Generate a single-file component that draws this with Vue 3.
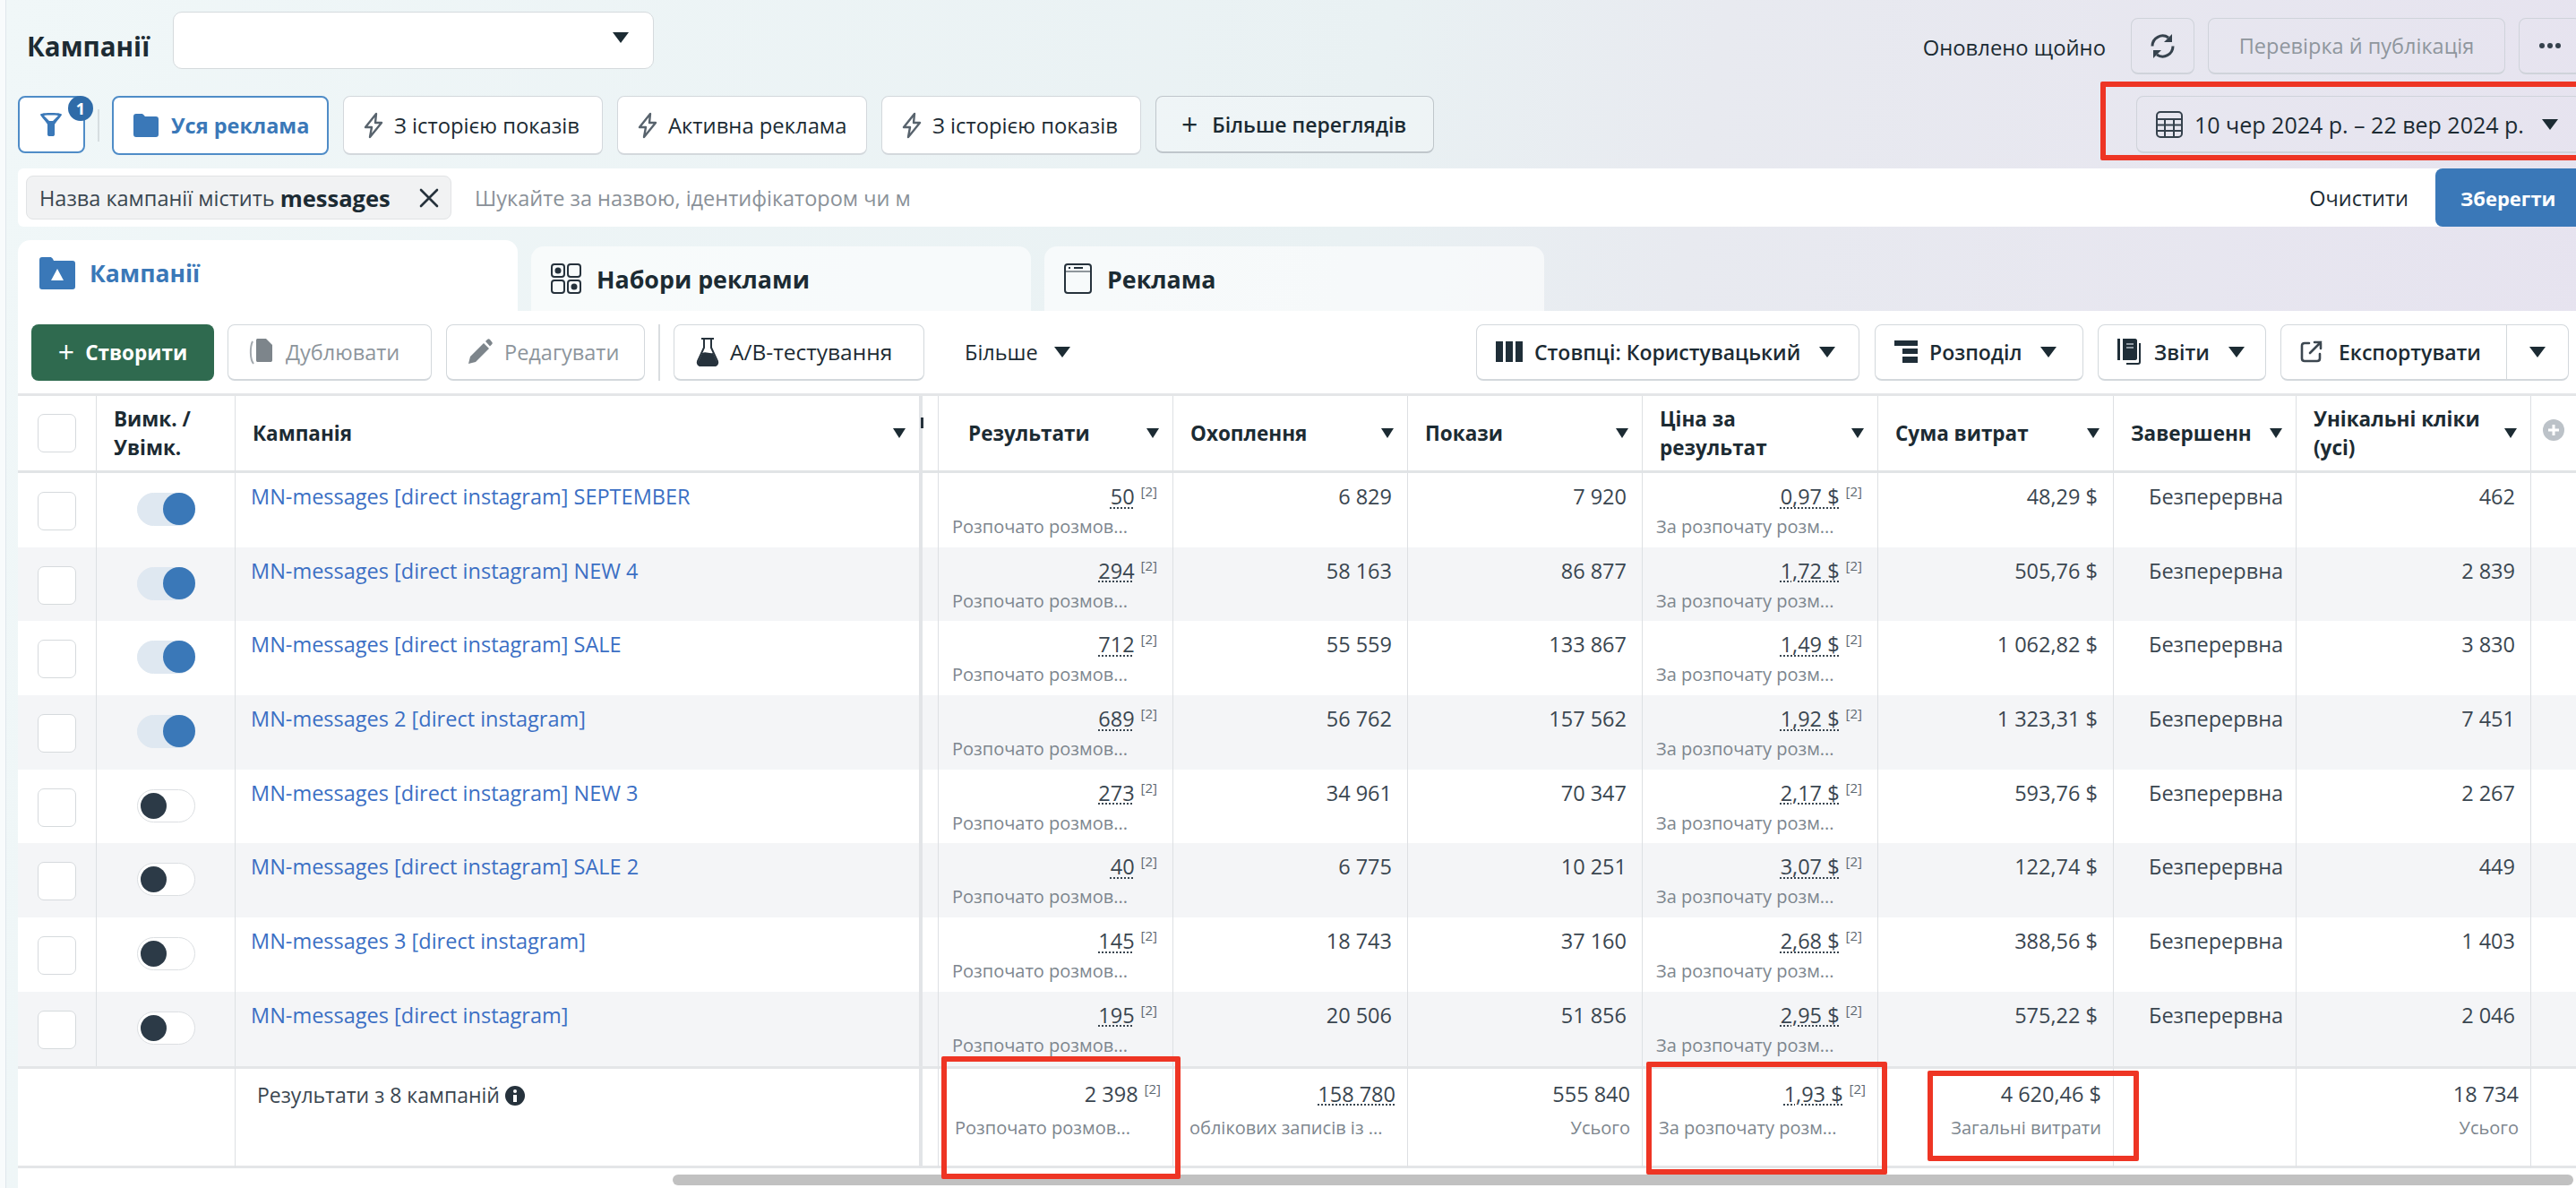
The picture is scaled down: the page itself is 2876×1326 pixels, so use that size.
<template>
  <div class="page">
    <div class="top-row">
      <h1 class="title">Кампанії</h1>
      <div class="account-select"><span class="caret"></span></div>
      <span class="updated">Оновлено щойно</span>
      <button class="btn ghost refresh">
        <svg width="29" height="29" viewBox="0 0 29 29" fill="none" stroke="#36424d" stroke-width="3">
          <path d="M3 14.5A11.5 11.5 0 0 1 21 5" />
          <path d="M26 14.500A11.5 11.5 0 0 1 8 24" />
          <path d="M25 1v9h-9z" fill="#36424d" stroke="none" />
          <path d="M4 28v-9h9z" fill="#36424d" stroke="none" />
        </svg>
      </button>
      <button class="btn ghost publish">Перевірка й публікація</button>
      <button class="btn ghost more-dots"><i></i><i></i><i></i></button>
    </div>

    <div class="views-row">
      <button class="btn filter-btn">
        <svg width="26" height="26" viewBox="0 0 26 26" fill="#3a78b8">
          <path d="M1 2c0-1 2-2 12-2s12 1 12 2c0 1-8 10-8 11v11c0 1.5-1 2-2 2h-4c-1 0-2-.5-2-2V13C9 12 1 3 1 2zm4 1 6 6h4l6-6c-3-.6-13-.6-16 0z" />
        </svg>
        <span class="badge">1</span>
      </button>
      <span class="views-sep"></span>
      <button class="btn view active">
        <svg width="28" height="26" viewBox="0 0 28 26" fill="#3a78b8">
          <path d="M0 3c0-2 1-3 3-3h6c1 0 2 .5 3 2l1 1h12c2 0 3 1 3 3v17c0 2-1 3-3 3H3c-2 0-3-1-3-3z" />
        </svg>
        Уся реклама
      </button>
      <button v-for="v in views" :key="v.id" class="btn view" :style="{ width: v.width + 'px' }">
        <svg width="24" height="30" viewBox="0 0 24 30" fill="none" stroke="#58636d" stroke-width="2.4" stroke-linejoin="round">
          <path d="M15 2 3 17h7l-2 11 13-16h-7z" />
        </svg>
        {{ v.label }}
      </button>
      <button class="btn more-views">
        <span class="plus">+</span>
        Більше переглядів
      </button>
      <button class="btn ghost date-btn">
        <svg width="32" height="32" viewBox="0 0 32 32" fill="none" stroke="#36424d" stroke-width="2">
          <rect x="2" y="2" width="28" height="28" rx="4" />
          <path d="M2 10h28M2 16.5h28M2 23h28M11 10v20M21 10v20" />
        </svg>
        <span>10 чер 2024 р. – 22 вер 2024 р.</span>
        <span class="caret"></span>
      </button>
    </div>

    <div class="filter-bar">
      <div class="filter-tag">
        Назва кампанії містить&nbsp;<b>messages</b>
        <svg class="tag-x" width="22" height="22" viewBox="0 0 22 22" stroke="#26323c" stroke-width="2.6" stroke-linecap="round">
          <path d="M2 2l18 18M20 2 2 20" />
        </svg>
      </div>
      <span class="search-hint">Шукайте за назвою, ідентифікатором чи м</span>
      <span class="clear">Очистити</span>
      <button class="save">Зберегти</button>
    </div>

    <div class="tabs">
      <div class="tab current">
        <svg width="40" height="36" viewBox="0 0 40 36" fill="#3a78b8">
          <path d="M0 3c0-2 1-3 3-3h9c1 0 2 .5 3 2l1 2h21c2 0 3 1 3 3v26c0 2-1 3-3 3H3c-2 0-3-1-3-3z" />
          <path d="M20 13 27 26h-14z" fill="#fff" />
        </svg>
        <span>Кампанії</span>
      </div>
      <div class="tab">
        <svg width="34" height="34" viewBox="0 0 34 34" fill="none" stroke="#26323c" stroke-width="2">
          <rect x="1" y="1" width="14" height="14" rx="3" />
          <rect x="19" y="1" width="14" height="14" rx="3" />
          <rect x="1" y="19" width="14" height="14" rx="3" />
          <rect x="19" y="19" width="14" height="14" rx="3" />
          <circle cx="8" cy="8" r="2.5" fill="#26323c" />
          <circle cx="26" cy="26" r="2.5" fill="#26323c" />
        </svg>
        <span>Набори реклами</span>
      </div>
      <div class="tab">
        <svg width="31" height="34" viewBox="0 0 31 34" fill="none" stroke="#26323c" stroke-width="2">
          <rect x="1" y="1" width="29" height="32" rx="3" />
          <path d="M1 9h29" stroke-width="1" />
          <path d="M5 5h2M11 5h10" />
        </svg>
        <span>Реклама</span>
      </div>
    </div>

    <div class="panel">
      <div class="toolbar">
        <button class="btn create"><span class="plus">+</span>Створити</button>
        <button class="btn muted dup">
          <svg width="28" height="29" viewBox="0 0 28 29" fill="#7d858b">
            <path d="M10 0h9l7 7v17c0 1.500-1 2-2 2H10c-1.500 0-2-.5-2-2V2c0-1.500.5-2 2-2z" />
            <path d="M4 3C1 9 1 23 5 28" fill="none" stroke="#a3a9ae" stroke-width="2" />
          </svg>
          Дублювати
        </button>
        <button class="btn muted edit">
          <svg width="28" height="29" viewBox="0 0 28 29" fill="#7d858b">
            <path d="M1 28l2-8L18 5l6 6L9 26z" />
            <path d="M20 3l2-2c1-1 2-1 3 0l2 2.500c1 1 1 2 0 3l-2 2z" />
          </svg>
          Редагувати
        </button>
        <span class="tool-sep"></span>
        <button class="btn ab">
          <svg width="26" height="32" viewBox="0 0 26 32" fill="none">
            <path d="M6 1h14M9 1v10L2 26c-1 3 1 5 3 5h16c2 0 4-2 3-5L17 11V1" stroke="#26323c" stroke-width="2" />
            <path d="M7 17c4-2 8 1 12 0l5 11c0 2-1 4-3 4H5c-2 0-3-2-3-4z" fill="#26323c" />
          </svg>
          А/В-тестування
        </button>
        <span class="more-link">Більше<span class="caret"></span></span>
        <button class="btn tool columns-btn">
          <svg width="30" height="23" viewBox="0 0 30 23" fill="#1f2e38">
            <rect x="0" y="0" width="8" height="23" />
            <rect x="11" y="0" width="8" height="23" />
            <rect x="22" y="0" width="8" height="23" />
          </svg>
          Стовпці: Користувацький<span class="caret"></span>
        </button>
        <button class="btn tool breakdown-btn">
          <svg width="26" height="25" viewBox="0 0 26 25" fill="#1f2e38">
            <rect x="0" y="0" width="26" height="6" />
            <rect x="9" y="9" width="17" height="6" />
            <rect x="9" y="18" width="17" height="7" />
          </svg>
          Розподіл<span class="caret"></span>
        </button>
        <button class="btn tool reports-btn">
          <svg width="28" height="30" viewBox="0 0 28 30" fill="#1f2e38">
            <rect x="0" y="0" width="3" height="24" />
            <path d="M6 0h14c1 0 2 1 2 2v20c0 1-1 2-2 2H6z" />
            <path d="M25 5v21c0 1-1 2-2 2H10" fill="none" stroke="#1f2e38" stroke-width="2" />
            <path d="M10 6h8M10 10h8" stroke="#8f99a2" stroke-width="2" />
          </svg>
          Звіти<span class="caret"></span>
        </button>
        <div class="btn export-btn">
          <span class="export-main">
            <svg width="25" height="25" viewBox="0 0 25 25" fill="none" stroke="#3c4750" stroke-width="2.600" stroke-linecap="round">
              <path d="M10 3H5C3 3 2 4 2 6v14c0 2 1 3 3 3h14c2 0 3-1 3-3v-5" />
              <path d="M11 14 23 2M16 2h7v7" />
            </svg>
            Експортувати
          </span>
          <span class="export-arrow"><span class="caret"></span></span>
        </div>
      </div>

      <table class="grid">
        <colgroup>
          <col style="width: 87px" />
          <col style="width: 155px" />
          <col style="width: 764px" />
          <col style="width: 21px" />
          <col v-for="c in metricCols" :key="c.key" :style="{ width: c.width + 'px' }" />
          <col style="width: 51px" />
        </colgroup>
        <thead>
          <tr>
            <th><span class="check"></span></th>
            <th class="toggle-head">Вимк. /<br />Увімк.</th>
            <th class="camp-head"><div class="head-cell">Кампанія<span class="caret small"></span></div></th>
            <th class="sticky-gap"><i class="tick"></i></th>
            <th v-for="c in metricCols" :key="c.key" :class="c.headClass">
              <div class="head-cell"><span v-html="c.title"></span><span class="caret small"></span></div>
            </th>
            <th class="add-col">
              <svg width="24" height="24" viewBox="0 0 24 24">
                <circle cx="12" cy="12" r="12" fill="#bcc2c8" />
                <path d="M12 6v12M6 12h12" stroke="#fff" stroke-width="3" />
              </svg>
            </th>
          </tr>
        </thead>
        <tbody>
          <tr v-for="(r, i) in rows" :key="r.name" :class="{ striped: i % 2 === 1 }">
            <td><span class="check"></span></td>
            <td>
              <span class="toggle" :class="{ on: r.on }"><span class="knob"></span></span>
            </td>
            <td class="name"><a>{{ r.name }}</a></td>
            <td class="sticky-gap"></td>
            <td class="num">
              <span class="dotted">{{ r.results }}</span><sup>[2]</sup>
              <div class="sub">Розпочато розмов...</div>
            </td>
            <td class="num">{{ r.reach }}</td>
            <td class="num">{{ r.shows }}</td>
            <td class="num">
              <span class="dotted">{{ r.cost }} $</span><sup>[2]</sup>
              <div class="sub">За розпочату розм...</div>
            </td>
            <td class="num">{{ r.spend }} $</td>
            <td class="end">Безперервна</td>
            <td class="num">{{ r.clicks }}</td>
            <td></td>
          </tr>
        </tbody>
        <tfoot>
          <tr>
            <td colspan="2" class="no-line"></td>
            <td class="total-label">
              Результати з 8 кампаній
              <svg width="22" height="22" viewBox="0 0 22 22">
                <circle cx="11" cy="11" r="11" fill="#26323c" />
                <circle cx="11" cy="6" r="2" fill="#fff" />
                <rect x="9" y="10" width="4" height="8" fill="#fff" />
              </svg>
            </td>
            <td class="sticky-gap"></td>
            <td class="num">2 398<sup>[2]</sup><div class="sub">Розпочато розмов...</div></td>
            <td class="num"><span class="dotted">158 780</span><div class="sub">облікових записів із ...</div></td>
            <td class="num">555 840<div class="sub right">Усього</div></td>
            <td class="num"><span class="dotted">1,93 $</span><sup>[2]</sup><div class="sub">За розпочату розм...</div></td>
            <td class="num">4 620,46 $<div class="sub right">Загальні витрати</div></td>
            <td></td>
            <td class="num">18 734<div class="sub right">Усього</div></td>
            <td></td>
          </tr>
        </tfoot>
      </table>
      <div class="scroll-track"><div class="scroll-thumb"></div></div>
    </div>

    <!-- red marks drawn over the screenshot -->
    <div class="mark mark-date"></div>
    <div class="mark mark-results"></div>
    <div class="mark mark-cost"></div>
    <div class="mark mark-spend"></div>
  </div>
</template>

<script setup>
const views = [
  { id: 1, label: 'З історією показів', width: 290 },
  { id: 2, label: 'Активна реклама', width: 279 },
  { id: 3, label: 'З історією показів', width: 290 }
]

const metricCols = [
  { key: 'results', title: 'Результати', width: 262, headClass: 'pad-results' },
  { key: 'reach', title: 'Охоплення', width: 262 },
  { key: 'shows', title: 'Покази', width: 262 },
  { key: 'cost', title: 'Ціна за<br>результат', width: 263 },
  { key: 'spend', title: 'Сума витрат', width: 263 },
  { key: 'end', title: 'Завершенн', width: 204 },
  { key: 'clicks', title: 'Унікальні кліки<br>(усі)', width: 262 }
]

const rows = [
  { name: 'MN-messages [direct instagram] SEPTEMBER', on: true, results: '50', reach: '6 829', shows: '7 920', cost: '0,97', spend: '48,29', clicks: '462' },
  { name: 'MN-messages [direct instagram] NEW 4', on: true, results: '294', reach: '58 163', shows: '86 877', cost: '1,72', spend: '505,76', clicks: '2 839' },
  { name: 'MN-messages [direct instagram] SALE', on: true, results: '712', reach: '55 559', shows: '133 867', cost: '1,49', spend: '1 062,82', clicks: '3 830' },
  { name: 'MN-messages 2 [direct instagram]', on: true, results: '689', reach: '56 762', shows: '157 562', cost: '1,92', spend: '1 323,31', clicks: '7 451' },
  { name: 'MN-messages [direct instagram] NEW 3', on: false, results: '273', reach: '34 961', shows: '70 347', cost: '2,17', spend: '593,76', clicks: '2 267' },
  { name: 'MN-messages [direct instagram] SALE 2', on: false, results: '40', reach: '6 775', shows: '10 251', cost: '3,07', spend: '122,74', clicks: '449' },
  { name: 'MN-messages 3 [direct instagram]', on: false, results: '145', reach: '18 743', shows: '37 160', cost: '2,68', spend: '388,56', clicks: '1 403' },
  { name: 'MN-messages [direct instagram]', on: false, results: '195', reach: '20 506', shows: '51 856', cost: '2,95', spend: '575,22', clicks: '2 046' }
]
</script>

<style>
html, body {
  margin: 0;
  overflow: hidden;
}
</style>

<style scoped>
.page {
  position: relative;
  width: 2876px;
  height: 1326px;
  overflow: hidden;
  box-sizing: border-box;
  padding-left: 20px;
  font-family: "Open Sans", "Noto Sans", sans-serif;
  font-size: 23.5px;
  color: #1c2b33;
  background:
    linear-gradient(90deg, #f8fbfc 0, #f8fbfc 6px, #dfe7ec 6px, #dfe7ec 7px, transparent 7px),
    linear-gradient(100deg, #f0f7f8 0%, #e9f1f3 50%, #e8eaf0 62%, #e6e2ef 100%);
}

button {
  font-family: inherit;
  font-size: inherit;
  color: inherit;
  margin: 0;
}

.btn {
  display: flex;
  align-items: center;
  box-sizing: border-box;
  height: 64px;
  background: #fff;
  border: 1.5px solid #d3d8dc;
  border-bottom-width: 2.5px;
  border-radius: 8px;
  padding: 0;
  flex: none;
}

.caret {
  display: inline-block;
  width: 0;
  height: 0;
  border-left: 9px solid transparent;
  border-right: 9px solid transparent;
  border-top: 12px solid #1c2b33;
  flex: none;
}

.caret.small {
  border-left-width: 7px;
  border-right-width: 7px;
  border-top-width: 11px;
}

.top-row {
  display: flex;
  align-items: flex-start;
  height: 107px;
  padding-top: 13px;
  box-sizing: border-box;
}

.title {
  flex: none;
  margin: 21px 0 0 10px;
  width: 163px;
  font-size: 29.5px;
  line-height: 36px;
  font-weight: 700;
  white-space: nowrap;
}

.account-select {
  display: flex;
  align-items: center;
  justify-content: flex-end;
  box-sizing: border-box;
  width: 537px;
  height: 64px;
  padding: 0 27px 6px 0;
  background: #fff;
  border: 1.5px solid #d5dadd;
  border-radius: 10px;
}

.updated {
  margin: 25px 28px 0 auto;
  line-height: 30px;
  font-size: 23.8px;
}

.ghost {
  background: transparent;
  border-color: #cfd3da;
}

.refresh {
  justify-content: center;
  width: 71px;
  height: 63px;
  margin-top: 7px;
}

.publish {
  justify-content: center;
  width: 332px;
  height: 63px;
  margin: 7px 0 0 15px;
  color: #8f969d;
  white-space: nowrap;
}

.more-dots {
  justify-content: center;
  gap: 3px;
  width: 70px;
  height: 63px;
  margin: 7px -6px 0 15px;
}

.more-dots i {
  width: 6px;
  height: 6px;
  border-radius: 50%;
  background: #36424d;
}

.views-row {
  display: flex;
  align-items: flex-start;
  height: 81px;
}

.filter-btn {
  position: relative;
  justify-content: center;
  width: 75px;
  border: 2px solid #4f8cc7;
  padding-right: 2px;
}

.badge {
  position: absolute;
  top: -2px;
  right: -11px;
  width: 28px;
  height: 28px;
  line-height: 28px;
  border-radius: 50%;
  background: #2f6ba8;
  color: #fff;
  font-size: 18px;
  font-weight: 700;
  text-align: center;
}

.views-sep {
  width: 2px;
  height: 36px;
  margin: 15px 14px 0 14px;
  background: #d6dde0;
  flex: none;
}

.view {
  gap: 11px;
  height: 66px;
  padding-left: 21px;
  margin-right: 16px;
  border-radius: 8px;
  white-space: nowrap;
  font-size: 23.8px;
}

.view.active {
  width: 242px;
  padding-left: 22px;
  gap: 14px;
  border: 2px solid #4f8cc7;
  color: #3a78b8;
  font-size: 23.5px;
  font-weight: 700;
}

.more-views {
  gap: 16px;
  width: 311px;
  height: 64px;
  padding-left: 28px;
  background: rgba(255, 255, 255, 0.25);
  border-color: #bfc6cb;
  font-weight: 600;
  font-size: 23px;
  white-space: nowrap;
}

.plus {
  font-size: 32px;
  line-height: 30px;
  font-weight: 400;
}

.date-btn {
  gap: 12px;
  width: 497px;
  height: 64px;
  margin-left: auto;
  margin-right: -6px;
  padding-left: 20px;
  white-space: nowrap;
  font-size: 25px;
}

.date-btn .caret {
  margin-left: 8px;
}

.filter-bar {
  display: flex;
  align-items: center;
  height: 65px;
  background: #fff;
  border-radius: 6px 0 0 6px;
}

.filter-tag {
  display: flex;
  align-items: center;
  box-sizing: border-box;
  width: 475px;
  height: 49px;
  margin-left: 9px;
  padding: 0 13px 0 14px;
  background: #f1f2f3;
  border: 1.5px solid #e1e3e5;
  border-radius: 8px;
  white-space: nowrap;
  color: #3a4650;
  flex: none;
}

.filter-tag b {
  font-size: 25.5px;
  color: #1c2b33;
}

.tag-x {
  margin-left: auto;
}

.search-hint {
  margin-left: 26px;
  color: #8a9198;
  white-space: nowrap;
}

.clear {
  margin-left: auto;
  margin-right: 30px;
}

.save {
  width: 157px;
  height: 65px;
  padding-left: 28px;
  border: 0;
  border-radius: 8px 0 0 8px;
  background: #3a78b8;
  color: #fff;
  font-size: 22px;
  font-weight: 700;
  text-align: left;
}

.tabs {
  display: flex;
  align-items: flex-end;
  gap: 15px;
  height: 94px;
}

.tab {
  display: flex;
  align-items: center;
  box-sizing: border-box;
  width: 558px;
  height: 72px;
  padding-left: 22px;
  gap: 17px;
  border-radius: 14px 14px 0 0;
  background: rgba(255, 255, 255, 0.6);
  font-size: 26.8px;
  font-weight: 700;
}

.tab.current {
  height: 79px;
  padding: 0 0 6px 24px;
  gap: 16px;
  background: #fff;
  color: #3a78b8;
  font-size: 26.5px;
}

.panel {
  height: 979px;
  background: #fff;
  overflow: hidden;
}

.toolbar {
  display: flex;
  align-items: center;
  height: 92px;
  padding: 0 8px 0 15px;
  box-sizing: border-box;
}

.toolbar .btn {
  height: 63px;
  white-space: nowrap;
}

.create {
  justify-content: center;
  gap: 12px;
  width: 204px;
  background: #2f6a4f;
  border: 0;
  color: #fff;
  font-size: 22.5px;
  font-weight: 700;
}

.muted {
  color: #8d959c;
  gap: 13px;
  padding-left: 23px;
}

.dup {
  width: 228px;
  margin-left: 15px;
}

.edit {
  width: 222px;
  margin-left: 16px;
}

.tool-sep {
  width: 2px;
  height: 63px;
  margin: 0 15px;
  background: #dadde0;
  flex: none;
}

.ab {
  gap: 12px;
  width: 280px;
  padding-left: 24px;
  font-size: 24.5px;
}

.more-link {
  display: flex;
  align-items: center;
  gap: 18px;
  margin-left: 45px;
}

.tool {
  gap: 13px;
  padding-left: 21px;
  font-weight: 600;
  font-size: 23px;
}

.tool .caret {
  margin-left: 8px;
}

.columns-btn {
  width: 428px;
  margin-left: auto;
}

.breakdown-btn {
  width: 233px;
  margin-left: 17px;
}

.reports-btn {
  width: 188px;
  margin-left: 16px;
}

.export-btn {
  width: 322px;
  margin-left: 16px;
  font-weight: 600;
  font-size: 23px;
}

.export-main {
  display: flex;
  align-items: center;
  gap: 18px;
  box-sizing: border-box;
  width: 252px;
  height: 100%;
  padding-left: 21px;
  border-right: 1.5px solid #d3d8dc;
}

.export-arrow {
  flex: 1;
  text-align: center;
  line-height: 0;
}

.grid {
  table-layout: fixed;
  width: 2856px;
  border-collapse: separate;
  border-spacing: 0;
  border-top: 3px solid #e4e6e8;
}

.grid th,
.grid td {
  box-sizing: border-box;
  padding: 0;
  border-left: 1px solid #dde0e3;
  vertical-align: top;
}

.grid th:first-child,
.grid td:first-child {
  border-left: 0;
}

.grid thead th {
  height: 86px;
  vertical-align: middle;
  text-align: left;
  font-weight: 700;
  font-size: 22.5px;
  line-height: 32px;
  border-bottom: 3px solid #e1e4e6;
}

.head-cell {
  display: flex;
  align-items: center;
  justify-content: space-between;
  padding: 0 15px 0 19px;
  white-space: nowrap;
}

.head-cell > span:first-child {
  overflow: hidden;
}

.pad-results .head-cell {
  padding-left: 33px;
}

.toggle-head {
  padding-left: 19px !important;
}

.check {
  display: block;
  box-sizing: border-box;
  width: 43px;
  height: 43px;
  margin: 0 auto;
  background: #fff;
  border: 1.5px solid #d6dadd;
  border-radius: 7px;
}

.grid tbody td {
  height: 82.7px;
}

.grid tbody td:nth-child(1) .check {
  margin-top: 21px;
}

.striped td {
  background: #f4f5f7;
}

.toggle {
  display: block;
  position: relative;
  box-sizing: border-box;
  width: 65px;
  height: 37px;
  margin: 22px 0 0 45px;
  border-radius: 19px;
  background: #fff;
  border: 1.5px solid #dcdfe2;
}

.toggle .knob {
  position: absolute;
  top: 3px;
  left: 3px;
  width: 29px;
  height: 29px;
  border-radius: 50%;
  background: #2c3a47;
}

.toggle.on {
  background: #dfe8f1;
  border-color: #dfe8f1;
}

.toggle.on .knob {
  top: -1px;
  left: auto;
  right: -1px;
  width: 36px;
  height: 36px;
  background: #3a78b8;
}

.name {
  padding: 10px 0 0 17px !important;
  line-height: 32px;
}

.name a {
  color: #3b6fc4;
}

.sticky-gap {
  background: #fff;
  border-left: 4px solid #e2e4e7 !important;
  position: relative;
}

.striped .sticky-gap {
  background: #f4f5f7;
}

.tick {
  position: absolute;
  left: -2px;
  top: 24px;
  width: 3px;
  height: 12px;
  background: #26323c;
}

.num {
  padding: 10px 17px 0 15px !important;
  text-align: right;
  line-height: 32px;
  color: #3a4650;
  white-space: nowrap;
}

.dotted {
  text-decoration: underline dotted #3a4650 2px;
  text-underline-offset: 3px;
}

sup {
  margin-left: 7px;
  font-size: 15px;
  line-height: 0;
  color: #5c6770;
  vertical-align: 9px;
}

.sub {
  margin-top: 3px;
  text-align: left;
  font-size: 20px;
  line-height: 30px;
  color: #7d868e;
  white-space: nowrap;
}

.sub.right {
  text-align: right;
}

.end {
  padding: 10px 0 0 39px !important;
  line-height: 32px;
  color: #3a4650;
}

.add-col {
  text-align: center !important;
}

tfoot td {
  height: 114px;
  border-top: 3px solid #e4e6e8;
  border-bottom: 3px solid #e4e6e8;
}

tfoot .num {
  padding: 12px 13px 0 18px !important;
}

tfoot .sub {
  margin-top: 7px;
}

.no-line {
  border-left: 0 !important;
}

.total-label {
  padding: 13px 0 0 24px !important;
  line-height: 32px;
  font-size: 23px;
  color: #3a4650;
}

.total-label svg {
  vertical-align: -3px;
}

.scroll-track {
  position: relative;
  height: 22px;
}

.scroll-thumb {
  position: absolute;
  left: 731px;
  top: 7px;
  width: 2122px;
  height: 12px;
  border-radius: 6px;
  background: #c1c1c1;
}

.mark {
  position: absolute;
  box-sizing: border-box;
  border: 6px solid #ee3524;
  border-radius: 2px;
}

.mark-date {
  left: 2345px;
  top: 91px;
  width: 560px;
  height: 88px;
}

.mark-results {
  left: 1051px;
  top: 1179px;
  width: 267px;
  height: 137px;
}

.mark-cost {
  left: 1838px;
  top: 1185px;
  width: 269px;
  height: 126px;
}

.mark-spend {
  left: 2152px;
  top: 1195px;
  width: 236px;
  height: 101px;
}
</style>
